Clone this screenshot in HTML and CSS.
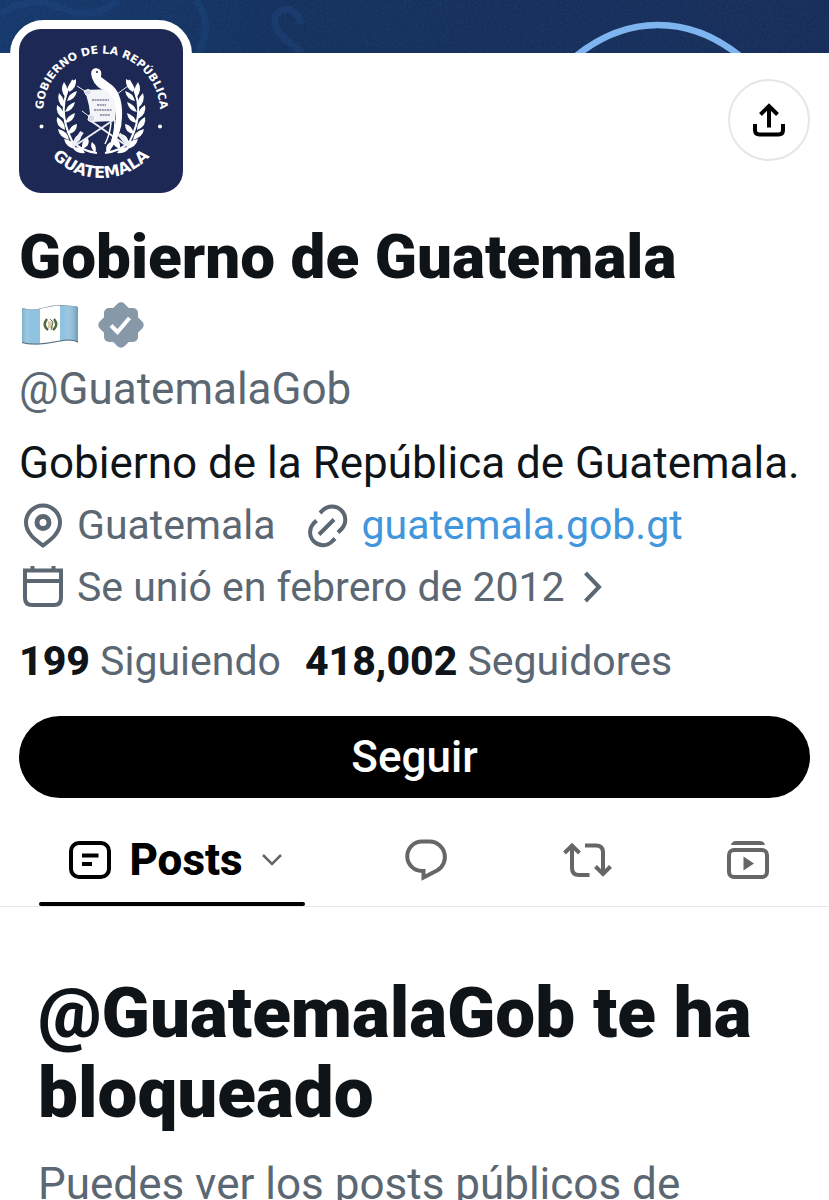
FILE: index.html
```html
<!DOCTYPE html>
<html lang="es">
<head>
<meta charset="utf-8">
<meta name="viewport" content="width=device-width, initial-scale=1">
<title>Gobierno de Guatemala</title>
<link rel="stylesheet" href="styles.css">
</head>
<body>
<div class="banner">
  <svg class="banner-art" viewBox="0 0 829 53" preserveAspectRatio="xMidYMin slice" aria-hidden="true">
    <defs>
      <linearGradient id="sea" x1="0" x2="1" y1="0" y2="0">
        <stop offset="0" stop-color="#15386c"/>
        <stop offset=".35" stop-color="#14315e"/>
        <stop offset="1" stop-color="#172d59"/>
      </linearGradient>
      <filter id="grain" x="0" y="0" width="100%" height="100%">
        <feTurbulence type="fractalNoise" baseFrequency=".45" numOctaves="2" seed="4"/>
        <feColorMatrix values="0 0 0 0 .25  0 0 0 0 .4  0 0 0 0 .65  .6 0 0 0 -.18"/>
      </filter>
    </defs>
    <rect width="829" height="53" fill="url(#sea)"/>
    <g fill="none" stroke="#1c467f" stroke-width="7" opacity=".4">
      <path d="M0 14Q30 -6 62 8T118 0"/>
      <path d="M196 0Q214 24 198 53"/>
      <path d="M300 24C300 6 276 4 275 20C274 34 286 38 302 53"/>
    </g>
    <rect width="829" height="53" filter="url(#grain)" opacity=".2"/>
    <path d="M570 61C625 13 691 13 746 61" fill="none" stroke="#7eb5f1" stroke-width="6.500"/>
  </svg>
</div>

<main>
  <section class="profile">
    <div class="top">
      <div class="avatar">
        <svg viewBox="0 0 164 164" role="img" aria-label="Gobierno de la República, Guatemala">
          <defs>
            <path id="arc-top" d="M24 90V83A58.500 58.500 0 0 1 141 83V90"/>
            <path id="arc-bottom" d="M16 83A66 66 0 0 0 148 83"/>
            <g id="branch" fill="#fff">
              <path d="M54 51Q36 78 53 112Q62 122 78 124" fill="none" stroke="#fff" stroke-width="2"/>
              <path d="M50 63Q48 54 57 50Q58 59 50 63Z"/><path d="M47 69Q40 61 45 53Q51 61 47 69Z"/>
              <path d="M48 72Q50 64 58 62Q56 71 48 72Z"/><path d="M45 79Q37 73 40 64Q47 71 45 79Z"/>
              <path d="M46 83Q49 75 56 73Q54 82 46 83Z"/><path d="M45 90Q36 85 38 76Q46 81 45 90Z"/>
              <path d="M46 94Q49 86 56 84Q55 93 46 94Z"/><path d="M46 101Q36 97 38 88Q46 92 46 101Z"/>
              <path d="M49 105Q51 96 58 95Q58 104 49 105Z"/><path d="M50 111Q40 108 39 100Q49 102 50 111Z"/>
              <path d="M54 115Q55 106 62 105Q63 113 54 115Z"/><path d="M57 120Q47 119 45 110Q55 111 57 120Z"/>
              <path d="M63 120Q62 111 69 109Q72 117 63 120Z"/><path d="M66 124Q57 125 54 119Q62 116 66 124Z"/>
              <path d="M76 124Q70 117 73 113Q79 118 76 124Z"/>
            </g>
          </defs>
          <rect width="164" height="164" fill="#1d2855"/>
          <text class="seal-top" text-anchor="middle"><textPath href="#arc-top" startOffset="50%">GOBIERNO DE LA REPÚBLICA</textPath></text>
          <text class="seal-bottom" text-anchor="middle"><textPath href="#arc-bottom" startOffset="50%">GUATEMALA</textPath></text>
          <circle cx="22.500" cy="97.500" r="2" fill="#fff"/><circle cx="141" cy="97.500" r="2" fill="#fff"/>
          <use href="#branch"/>
          <use href="#branch" transform="translate(164 0) scale(-1 1)"/>
          <g stroke="#eceef5" fill="none">
            <path d="M58 57L72 66M109 57L94 68M63 82L71 88" stroke-width="1"/>
            <path d="M72 92L108 117M96 90L57 116" stroke-width="2"/>
            <path d="M54 117L63 103M110 117L100 105" stroke-width="4"/>
          </g>
          <path d="M66 61L93 60L98 72L96 92L72 93L70 77Z" fill="#f3f4f8"/>
          <path d="M65 62Q69 59 73 62Q72 67 67 66ZM70 86Q76 85 76 90Q73 95 69 91Z" fill="#d6d9e5" stroke="#fff"/>
          <g stroke="#777d99" stroke-width="1.500" stroke-dasharray="2 .6"><path d="M73 71H90M78 76H87M75 81H93M81 86H91"/></g>
          <path d="M73 49Q70 40 77 39Q84 40 82 48L94 57Q104 67 103 88Q103 106 90 123L87 124Q98 102 97 82Q97 70 88 62Q77 60 73 49Z" fill="#fff"/>
          <path d="M96 91Q96 108 90 119M92 94Q91 105 86 115" fill="none" stroke="#fff" stroke-width="1.500"/>
          <circle cx="78" cy="43" r="1" fill="#1d2855"/>
        </svg>
      </div>
      <button class="share" type="button" aria-label="Compartir">
        <svg viewBox="0 0 32 34" aria-hidden="true"><path d="M16 24.500V3M7.500 11.500L16 3L24.500 11.500M2 21V27Q2 31.500 6.500 31.500H25.500Q30 31.500 30 27V21" fill="none" stroke="#000" stroke-width="4"/></svg>
      </button>
    </div>

    <h1 class="name">Gobierno de Guatemala</h1>
    <div class="marks">
      <svg class="flag" viewBox="0 0 56 40" role="img" aria-label="Bandera de Guatemala">
        <defs>
          <clipPath id="wave"><path d="M0 3Q10 6 22 2.500T45 .5Q52 .5 56 2V37.500Q50 34 38 36.500T16 39.500Q7 40 0 38Z"/></clipPath>
          <linearGradient id="fold" x1="0" x2="1"><stop offset="0" stop-color="#6899b3" stop-opacity=".5"/><stop offset=".15" stop-color="#fff" stop-opacity="0"/><stop offset=".75" stop-color="#fff" stop-opacity="0"/><stop offset="1" stop-color="#527d97" stop-opacity=".6"/></linearGradient>
        </defs>
        <g clip-path="url(#wave)">
          <path fill="#8fc3df" d="M0 0H56V40H0Z"/><path fill="#fff" d="M18 0H38V40H18Z"/>
          <path fill="url(#fold)" d="M0 0H56V40H0Z"/>
          <path d="M0 38Q7 40 16 39.500T38 36.500Q50 34 56 37.500" fill="none" stroke="#5f6f7a" stroke-width="2"/>
          <path d="M0 3Q10 6 22 2.500T45 .5Q52 .5 56 2" fill="none" stroke="#8c9ba4" stroke-width="1"/>
        </g>
        <path d="M25 14Q20 20 26 25M32 14Q37 20 31 25" fill="none" stroke="#50683f" stroke-width="2.500"/>
        <path d="M26 16L31 17V23H26Z" fill="#d7cfad"/><path d="M28 14L31 17L29 25" fill="none" stroke="#5d744e"/>
      </svg>
      <svg class="verified" viewBox="0 0 46 46" role="img" aria-label="Cuenta verificada">
        <g fill="#8799a9"><rect x="6" y="6" width="34" height="34" rx="5"/><rect x="5.500" y="5.500" width="35" height="35" rx="5" transform="rotate(45 23 23)"/></g>
        <path d="M13 23.500L19.500 30L31.500 16" fill="none" stroke="#fff" stroke-width="4"/>
      </svg>
    </div>
    <p class="handle">@GuatemalaGob</p>
    <p class="bio">Gobierno de la República de Guatemala.</p>

    <div class="meta">
      <span class="meta-item">
        <svg class="icon" viewBox="0 0 48 48" aria-hidden="true"><g fill="none" stroke="currentColor"><path d="M24 44.500C16 38.500 7 32 7 21.500A17 17 0 0 1 41 21.500C41 32 32 38.500 24 44.500Z" stroke-width="4"/><circle cx="24" cy="21.500" r="6" stroke-width="5"/></g></svg>
        Guatemala
      </span>
      <span class="meta-item">
        <svg class="icon" viewBox="0 0 48 48" aria-hidden="true"><path d="M15 33.500L30 18.500M16 12L18.500 9.500A12.700 12.700 0 0 1 37.500 28L34 31.500M12.500 19.500L9.500 22.500A12.700 12.700 0 0 0 28.500 40L31 37.500" fill="none" stroke="currentColor" stroke-width="4"/></svg>
        <a href="#sitio">guatemala.gob.gt</a>
      </span>
    </div>
    <div class="meta">
      <span class="meta-item">
        <svg class="icon" viewBox="0 0 48 48" aria-hidden="true"><path d="M6 7.500H42V35Q42 42 35 42H13Q6 42 6 35ZM6 18H42M13.500 3V8M34.500 3V8" fill="none" stroke="currentColor" stroke-width="4"/></svg>
        Se unió en febrero de 2012
        <svg class="more" viewBox="0 0 20 32" aria-hidden="true"><path d="M2.500 2L16 16L2.500 30" fill="none" stroke="currentColor" stroke-width="4"/></svg>
      </span>
    </div>

    <div class="counts">
      <a href="#siguiendo"><strong>199</strong> Siguiendo</a>
      <a href="#seguidores"><strong>418,002</strong> Seguidores</a>
    </div>

    <button class="follow" type="button">Seguir</button>
  </section>

  <nav class="tabs" aria-label="Secciones del perfil">
    <a class="tab tab-active" href="#posts" aria-current="page">
      <svg class="tab-icon" viewBox="0 0 42 38" aria-hidden="true"><rect x="2" y="2" width="38" height="34" rx="8" fill="none" stroke="currentColor" stroke-width="4"/><path d="M13 14.500H29.500M13 23H23" stroke="currentColor" stroke-width="4"/></svg>
      Posts
      <svg class="tab-arrow" viewBox="0 0 22 14" aria-hidden="true"><path d="M2 2L11 11L20 2" fill="none" stroke="#666" stroke-width="2.500"/></svg>
    </a>
    <a class="tab" href="#respuestas" aria-label="Respuestas">
      <svg class="tab-reply" viewBox="0 0 44 42" aria-hidden="true"><path d="M18 2.500H26A15.500 15.500 0 0 1 33 31.500L19.500 38.500V32H18A14.750 14.750 0 0 1 18 2.500Z" fill="none" stroke="currentColor" stroke-width="4"/></svg>
    </a>
    <a class="tab" href="#reposts" aria-label="Reposts">
      <svg class="tab-repost" viewBox="0 0 50 36" aria-hidden="true"><path d="M2.500 11L10 3.500L17.500 11M10 4V26Q10 33 17 33H27.500M23 3.500H34Q41 3.500 41 10.500V32M33.500 24.500L41 32L48.500 24.500" fill="none" stroke="currentColor" stroke-width="4"/></svg>
    </a>
    <a class="tab" href="#videos" aria-label="Videos">
      <svg class="tab-video" viewBox="0 0 42 40" aria-hidden="true"><path d="M4 5Q5 1 9 1H33Q37 1 38 5Z" fill="currentColor"/><rect x="2" y="10" width="38" height="27" rx="5" fill="none" stroke="currentColor" stroke-width="4"/><path d="M16.500 16.500L27 23.500L16.500 30.500Z" fill="currentColor"/></svg>
    </a>
  </nav>

  <section class="blocked">
    <h2>@GuatemalaGob te ha bloqueado</h2>
    <p>Puedes ver los posts públicos de</p>
  </section>
</main>
</body>
</html>
```
FILE: styles.css
```css
* { box-sizing: border-box; }
body {
  margin: 0;
  background: #fff;
  color: #0f1419;
  font-family: Roboto, "Liberation Sans", sans-serif;
  font-size: 44px;
  line-height: 62px;
}
h1, h2, p { margin: 0; }
a { color: inherit; text-decoration: none; }
svg { display: block; flex: none; }
button { font-family: inherit; padding: 0; cursor: pointer; }

.banner { height: 53px; background: #17315e; overflow: hidden; }
.banner-art { width: 100%; height: 100%; }

.profile { padding: 0 19px; }
.top { display: flex; justify-content: space-between; align-items: flex-start; }
.avatar {
  position: relative;
  width: 182px;
  margin: -33px 0 0 -9px;
  border: 9px solid #fff;
  border-radius: 34px;
  background: #fff;
}
.avatar svg { width: 100%; border-radius: 22px; }
.seal-top, .seal-bottom { fill: #fff; font-family: "DejaVu Sans", sans-serif; font-weight: 700; }
.seal-top { font-size: 11px; }
.seal-bottom { font-size: 16px; }
.share {
  display: grid;
  place-items: center;
  width: 82px;
  height: 82px;
  margin-top: 26px;
  border: 2px solid #e4e6e7;
  border-radius: 50%;
  background: #fff;
}
.share svg { width: 32px; }

.name { margin-top: 20px; font-size: 62px; font-weight: 900; line-height: 70px; }
.marks { display: flex; align-items: center; gap: 20px; height: 66px; padding-left: 3px; }
.flag { width: 56px; }
.verified { width: 46px; }
.handle { color: #5b6772; }
.bio { margin-top: 12px; }
.meta { display: flex; flex-wrap: wrap; column-gap: 28px; color: #5b6772; font-size: 41px; }
.meta-item { display: flex; align-items: center; gap: 10px; }
.icon { width: 48px; }
.more { width: 20px; margin-left: 8px; }
.meta a { color: #4296dc; }
.counts { display: flex; flex-wrap: wrap; column-gap: 24px; margin-top: 12px; color: #5b6772; font-size: 41px; }
.counts strong { color: #0f1419; font-weight: 800; }
.follow {
  display: block;
  width: 100%;
  height: 82px;
  margin-top: 24px;
  border: 0;
  border-radius: 41px;
  background: #000;
  color: #fff;
  font-size: 44px;
  font-weight: 500;
}

.tabs {
  display: grid;
  grid-template-columns: 306px repeat(3, 1fr);
  height: 109px;
  padding-left: 39px;
  border-bottom: 1px solid #e6e8e9;
  color: #666;
}
.tab { display: flex; align-items: center; justify-content: center; padding-top: 16px; }
.tab-active {
  position: relative;
  gap: 18px;
  margin-right: 40px;
  padding-left: 8px;
  color: #000;
  font-weight: 800;
}
.tab-active::after {
  content: "";
  position: absolute;
  inset: auto 0 0;
  height: 4px;
  border-radius: 2px;
  background: #000;
}
.tab-icon { width: 42px; }
.tab-arrow { width: 22px; }
.tab-reply { width: 44px; }
.tab-repost { width: 50px; }
.tab-video { width: 42px; }

.blocked { padding: 66px 38px 0; }
.blocked h2 { font-size: 71px; font-weight: 900; line-height: 80px; }
.blocked p { margin-top: 20px; color: #5b6772; font-size: 44px; }
```
